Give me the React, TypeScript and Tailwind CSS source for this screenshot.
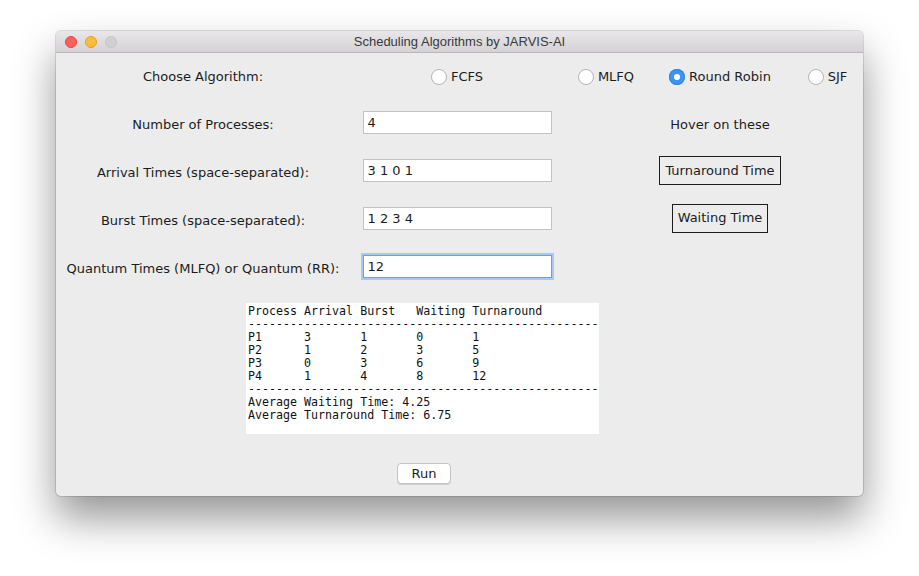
import React from 'react';

const rows = [
  { pid: 'P1', arrival: 3, burst: 1, waiting: 0, turnaround: 1 },
  { pid: 'P2', arrival: 1, burst: 2, waiting: 3, turnaround: 5 },
  { pid: 'P3', arrival: 0, burst: 3, waiting: 6, turnaround: 9 },
  { pid: 'P4', arrival: 1, burst: 4, waiting: 8, turnaround: 12 },
];

const pad = (s: string | number, n: number) => String(s).padEnd(n, ' ');

const output = [
  'Process Arrival Burst   Waiting Turnaround',
  '-'.repeat(50),
  ...rows.map(
    (r) => pad(r.pid, 8) + pad(r.arrival, 8) + pad(r.burst, 8) + pad(r.waiting, 8) + r.turnaround
  ),
  '-'.repeat(50),
  'Average Waiting Time: 4.25',
  'Average Turnaround Time: 6.75',
].join('\n');

const Radio: React.FC<{ label: string; checked?: boolean }> = ({ label, checked }) => (
  <label className="flex items-center gap-[4px]">
    {checked ? (
      <span className="flex h-[16px] w-[16px] items-center justify-center rounded-full bg-[#3d94f6] shadow-[inset_0_0_0_1px_#2f84e6]">
        <span className="h-[6px] w-[6px] rounded-full bg-white" />
      </span>
    ) : (
      <span className="h-[16px] w-[16px] rounded-full border border-[#b5b5b5] bg-white" />
    )}
    <span>{label}</span>
  </label>
);

const Entry: React.FC<{ value: string; focused?: boolean }> = ({ value, focused }) => (
  <div
    className={
      focused
        ? 'mb-[5px] flex h-[23px] w-[189px] items-center border border-[#6d9fe8] bg-white pl-[4px] shadow-[0_0_0_2px_#a9c8f5]'
        : 'mb-[5px] flex h-[23px] w-[189px] items-center border border-[#c2c2c2] bg-white pl-[4px]'
    }
  >
    {value}
  </div>
);

export default function App() {
  return (
    <div className="min-h-[576px] w-[919px] bg-white pl-[56px] pt-[31px]">
      <div
        className="w-[807px] overflow-hidden rounded-[5px] bg-[#ececec] text-[13px] text-[#1c1c1c] shadow-[0_0_0_1px_rgba(0,0,0,0.12),0_22px_42px_rgba(0,0,0,0.42)]"
        style={{ fontFamily: '"DejaVu Sans", "Noto Sans", sans-serif' }}
      >
        {/* title bar */}
        <div className="relative flex h-[22px] items-center justify-center border-b border-[#b7b7b7] bg-gradient-to-b from-[#e9e7e9] to-[#d4d2d4]">
          <div className="absolute left-[9px] top-[5px] flex gap-[8px]">
            <span className="h-[12px] w-[12px] rounded-full border border-[#e2463f] bg-[#fc605b]" />
            <span className="h-[12px] w-[12px] rounded-full border border-[#e1a116] bg-[#fdbc40]" />
            <span className="h-[12px] w-[12px] rounded-full border border-[#c4c4c4] bg-[#d1d0d1]" />
          </div>
          <span
            className="text-[13px] text-[#3a3a3a]"
            style={{ fontFamily: '"Liberation Sans", Arial, sans-serif' }}
          >
            Scheduling Algorithms by JARVIS-AI
          </span>
        </div>

        {/* form */}
        <div className="grid grid-cols-[294px_214px_84px_144px_71px] grid-rows-[repeat(5,48px)] items-center">
          <div className="text-center">Choose Algorithm:</div>
          <div className="flex justify-center"><Radio label="FCFS" /></div>
          <div className="flex justify-center"><Radio label="MLFQ" /></div>
          <div className="flex justify-center"><Radio label="Round Robin" checked /></div>
          <div className="flex justify-center"><Radio label="SJF" /></div>

          <div className="text-center">Number of Processes:</div>
          <div className="flex justify-center"><Entry value="4" /></div>
          <div />
          <div className="text-center">Hover on these</div>
          <div />

          <div className="text-center">Arrival Times (space-separated):</div>
          <div className="flex justify-center"><Entry value="3 1 0 1" /></div>
          <div />
          <div className="flex justify-center">
            <div className="mb-[5px] flex h-[29px] w-[122px] items-center justify-center border border-[#1c1c1c]">
              Turnaround Time
            </div>
          </div>
          <div />

          <div className="text-center">Burst Times (space-separated):</div>
          <div className="flex justify-center"><Entry value="1 2 3 4" /></div>
          <div />
          <div className="flex justify-center">
            <div className="mb-[6px] flex h-[29px] w-[96px] items-center justify-center border border-[#1c1c1c]">
              Waiting Time
            </div>
          </div>
          <div />

          <div className="text-center">Quantum Times (MLFQ) or Quantum (RR):</div>
          <div className="flex justify-center"><Entry value="12" focused /></div>
          <div />
          <div />
          <div />
        </div>

        {/* output */}
        <div className="ml-[190px] mt-[10px] h-[131px] w-[353px] bg-white pl-[2px] pt-[2px]">
          <pre
            className="whitespace-pre text-[11.65px] leading-[13px] text-[#111]"
            style={{ fontFamily: '"DejaVu Sans Mono", "Liberation Mono", monospace' }}
          >
            {output}
          </pre>
        </div>

        <div className="flex pb-[12px] pl-[341px] pt-[29px]">
          <button className="h-[21px] w-[54px] rounded-[4px] border border-[#c3c3c3] bg-white text-[13px] shadow-[0_1px_0_rgba(0,0,0,0.12)]">
            Run
          </button>
        </div>
      </div>
    </div>
  );
}
